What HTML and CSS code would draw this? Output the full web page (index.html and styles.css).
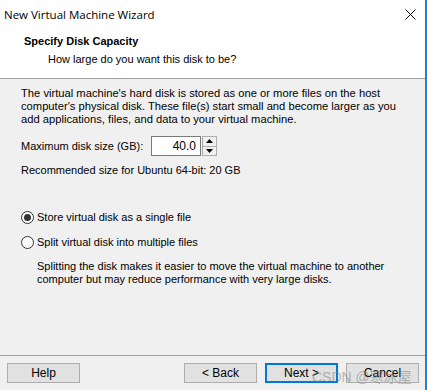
FILE: index.html
```html
<!DOCTYPE html>
<html lang="en">
<head>
  <meta charset="UTF-8" />
  <title>New Virtual Machine Wizard</title>
  <link rel="stylesheet" href="styles.css">
</head>
<body>
  <div class="window">
    <div class="titlebar">
      <span class="title">New Virtual Machine Wizard</span>
      <span class="close">
        <svg width="11" height="11" viewBox="0 0 11 11"><path d="M0.5 0.5 L10.5 10.5 M10.5 0.5 L0.5 10.5" stroke="#000" stroke-width="1" /></svg>
      </span>
    </div>
    <div class="header">
      <div class="heading">Specify Disk Capacity</div>
      <div class="subheading">How large do you want this disk to be?</div>
    </div>

    <div class="content">
      <p class="intro">The virtual machine's hard disk is stored as one or more files on the host computer's physical disk. These file(s) start small and become larger as you add applications, files, and data to your virtual machine.</p>

      <div class="size-row">
        <label for="size">Maximum disk size (GB):</label>
        <input id="size" class="size-input" type="text" value="40.0" />
        <div class="spinner">
          <span class="spin up"><svg width="7" height="4" viewBox="0 0 7 4"><path d="M3.5 0 L7 4 L0 4 Z" fill="#000" /></svg></span>
          <span class="spin down"><svg width="7" height="4" viewBox="0 0 7 4"><path d="M0 0 L7 0 L3.5 4 Z" fill="#000" /></svg></span>
        </div>
      </div>
      <div class="recommend">Recommended size for Ubuntu 64-bit: 20 GB</div>

      <div class="options">
        <div class="radio-row">
          <span class="radio checked"></span>
          <span>Store virtual disk as a single file</span>
        </div>
        <div class="radio-row">
          <span class="radio"></span>
          <span>Split virtual disk into multiple files</span>
        </div>
        <p class="note">Splitting the disk makes it easier to move the virtual machine to another computer but may reduce performance with very large disks.</p>
      </div>
    </div>

    <div class="footer">
      <button class="btn">Help</button>
      <div class="nav">
        <button class="btn">&lt; Back</button>
        <button class="btn default">Next &gt;</button>
        <button class="btn">Cancel</button>
      </div>
      <span class="watermark">CSDN @寒冰屋</span>
    </div>
  </div>
</body>
</html>
```

FILE: styles.css
```css
body {
  margin: 0;
  font-family: 'Liberation Sans', Arial, sans-serif;
  font-size: 11px;
  color: #000;
  background: #f0f0f0;
}
.window {
  position: relative;
  width: 425px;
  height: 390px;
  border-right: 2px solid #1883d7;
  background: #f0f0f0;
  display: flex;
  flex-direction: column;
}
.titlebar {
  height: 28px;
  background: #fff;
  display: flex;
  align-items: center;
  justify-content: space-between;
  padding: 0 9px 0 4px;
}
.title {
  font-family: 'Open Sans', sans-serif;
  font-size: 11.5px;
  color: #000;
}
.close {
  display: flex;
}
.header {
  background: #fff;
  height: 50px;
  border-bottom: 1px solid #a0a0a0;
}
.heading {
  font-weight: bold;
  padding-left: 24px;
  margin-top: 6px;
  line-height: 14px;
}
.subheading {
  padding-left: 48px;
  margin-top: 4px;
  line-height: 14px;
}
.content {
  flex: 1;
  padding: 8px 20px 0 21px;
}
.intro {
  margin: 0;
  line-height: 13px;
  font-size: 11.2px;
}
.size-row {
  display: flex;
  align-items: center;
  margin-top: 9px;
  height: 22px;
}
.size-row label {
  width: 130px;
}
.size-input {
  width: 44px;
  height: 18px;
  border: 1px solid #7a7a7a;
  padding: 0 4px 0 0;
  margin: 0;
  text-align: right;
  font: inherit;
  font-size: 12px;
  background: #fff;
}
.spinner {
  display: flex;
  flex-direction: column;
  margin-left: 1px;
  width: 15px;
  height: 20px;
}
.spin {
  flex: 1;
  display: flex;
  align-items: center;
  justify-content: center;
  background: #f0f0f0;
  border: 1px solid #adadad;
}
.spin.down {
  border-top: none;
}
.recommend {
  margin-top: 7px;
  line-height: 13px;
}
.options {
  margin-top: 33px;
}
.radio-row {
  display: flex;
  align-items: center;
  gap: 3px;
  height: 14px;
  margin-bottom: 11px;
}
.radio {
  width: 11px;
  height: 11px;
  border: 1px solid #333;
  border-radius: 50%;
  background: #fff;
  position: relative;
}
.radio.checked::after {
  content: '';
  position: absolute;
  left: 2px;
  top: 2px;
  width: 7px;
  height: 7px;
  border-radius: 50%;
  background: #333;
}
.note {
  margin: 7px 0 0 16px;
  line-height: 13px;
}
.footer {
  position: relative;
  height: 34px;
  border-top: 1px solid #a0a0a0;
  display: flex;
  align-items: center;
  justify-content: space-between;
  padding: 0 6px 0 7px;
}
.nav {
  display: flex;
  gap: 8px;
}
.btn {
  width: 73px;
  height: 20px;
  background: #e1e1e1;
  border: 1px solid #adadad;
  font: inherit;
  font-size: 12px;
  padding: 0;
  margin: 0;
}
.btn.default {
  border: 2px solid #0078d7;
}
.watermark {
  position: absolute;
  left: 312px;
  top: 10px;
  font-size: 14px;
  color: rgba(120, 120, 120, 0.5);
  font-family: 'Liberation Sans', 'Noto Sans CJK SC', sans-serif;
}
```
